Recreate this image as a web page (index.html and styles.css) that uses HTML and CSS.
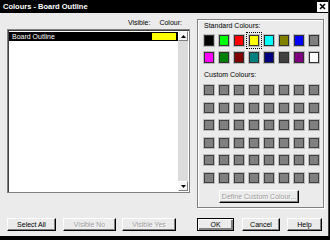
FILE: index.html
```html
<!DOCTYPE html>
<html lang="en">
<head>
  <meta charset="UTF-8">
  <title>Colours - Board Outline</title>
  <link rel="stylesheet" href="styles.css">
</head>
<body>
  <div class="window">
    <div class="titlebar">
      <span>Colours - Board Outline</span>
      <span class="close">
        <svg width="7" height="7" viewBox="0 0 7 7"><path d="M1 1L6 6M6 1L1 6" stroke="#000" stroke-width="1.6"/></svg>
      </span>
    </div>

    <div class="main">
      <div class="left">
        <div class="heads">
          <span>Visible:</span>
          <span>Colour:</span>
        </div>
        <div class="list">
          <div class="rows">
            <div class="row sel">
              <span>Board Outline</span>
              <span class="chip"></span>
            </div>
          </div>
          <div class="scroll">
            <div class="arrow"><svg width="5" height="3" viewBox="0 0 5 3"><path d="M0 3L2.5 0L5 3Z" fill="#000"/></svg></div>
            <div class="track"></div>
            <div class="arrow"><svg width="5" height="3" viewBox="0 0 5 3"><path d="M0 0L2.5 3L5 0Z" fill="#000"/></svg></div>
          </div>
        </div>
      </div>

      <div class="group">
        <div class="label">Standard Colours:</div>
        <div class="std">
          <span class="sw" style="background:#000000"></span>
          <span class="sw" style="background:#00ff00"></span>
          <span class="sw" style="background:#ff0000"></span>
          <span class="sw focus" style="background:#ffff00"></span>
          <span class="sw" style="background:#00ffff"></span>
          <span class="sw" style="background:#808000"></span>
          <span class="sw" style="background:#0000ff"></span>
          <span class="sw" style="background:#808080"></span>
          <span class="sw" style="background:#ff00ff"></span>
          <span class="sw" style="background:#008000"></span>
          <span class="sw" style="background:#800000"></span>
          <span class="sw" style="background:#008080"></span>
          <span class="sw" style="background:#000080"></span>
          <span class="sw" style="background:#404040"></span>
          <span class="sw" style="background:#800080"></span>
          <span class="sw" style="background:#ffffff"></span>
        </div>
        <div class="label custom-label">Custom Colours:</div>
        <div class="custom" id="custom"></div>
        <div class="btn define disabled">Define Custom Colour...</div>
      </div>
    </div>

    <div class="footer">
      <div class="btn w-sel">Select All</div>
      <div class="btn w-no disabled">Visible No</div>
      <div class="btn w-yes disabled">Visible Yes</div>
      <div class="btn w-ok default">OK</div>
      <div class="btn w-cancel">Cancel</div>
      <div class="btn w-help">Help</div>
    </div>
  </div>
  <script>
    const custom = document.getElementById('custom');
    for (let i = 0; i < 48; i++) {
      const cell = document.createElement('span');
      cell.className = 'sw grey';
      custom.appendChild(cell);
    }
  </script>
</body>
</html>
```

FILE: styles.css
```css
* {
  margin: 0;
  padding: 0;
  box-sizing: border-box;
  font-family: "Liberation Sans", Arial, sans-serif;
}

body {
  background: #000;
  width: 330px;
  height: 240px;
  overflow: hidden;
}

.window {
  width: 329px;
  height: 236px;
  background: #ebebeb;
  border-right: 1px solid #404040;
  display: flex;
  flex-direction: column;
}

.titlebar {
  height: 13px;
  background: #000;
  color: #fff;
  font-size: 7.5px;
  font-weight: bold;
  display: flex;
  align-items: center;
  justify-content: space-between;
  padding-left: 3px;
}

.close {
  width: 11px;
  height: 10px;
  background: #fff;
  display: flex;
  align-items: center;
  justify-content: center;
}

.main {
  display: flex;
  gap: 7px;
  padding-left: 7px;
}

.left {
  width: 183px;
}

.heads {
  height: 16px;
  display: flex;
  align-items: center;
  justify-content: flex-end;
  gap: 9px;
  padding: 2px 8px 0 0;
  font-size: 7px;
  color: #000;
}

.list {
  height: 164px;
  background: #fff;
  border: 1px solid #808080;
  box-shadow: inset 1px 1px 0 #404040;
  display: flex;
  padding: 1px 1px 1px 1px;
}

.rows {
  flex: 1;
  padding-top: 1px;
}

.row {
  height: 9px;
  font-size: 7px;
  display: flex;
  align-items: center;
  justify-content: space-between;
  padding: 0 2px 0 3px;
}

.row.sel {
  background: #000;
  color: #fff;
}

.chip {
  width: 24px;
  height: 7px;
  background: #ffff00;
}

.scroll {
  width: 10px;
  display: flex;
  flex-direction: column;
  background: #dcdcdc;
}

.arrow {
  height: 10px;
  background: #f4f4f4;
  border: 1px solid;
  border-color: #fff #808080 #808080 #fff;
  display: flex;
  align-items: center;
  justify-content: center;
}

.track {
  flex: 1;
}

.group {
  width: 127px;
  height: 189px;
  margin-top: 6px;
  border: 1px solid #808080;
  box-shadow: 1px 1px 0 #fff, inset 1px 1px 0 #fff;
  padding: 1px 0 0 6px;
}

.label {
  height: 10px;
  line-height: 10px;
  font-size: 7px;
  color: #000;
}

.std {
  display: grid;
  grid-template-columns: repeat(8, 10px);
  grid-auto-rows: 11px;
  column-gap: 5px;
  row-gap: 6px;
  margin-top: 4px;
}

.custom-label {
  margin-top: 7px;
}

.custom {
  display: grid;
  grid-template-columns: repeat(8, 10px);
  grid-auto-rows: 10px;
  column-gap: 5px;
  row-gap: 7.5px;
  margin-top: 5px;
}

.sw {
  border: 1px solid #303030;
  box-shadow: 0 0 0 1px #bcbcbc;
}

.sw.grey {
  background: #808080;
  border-color: #404040;
}

.sw.focus {
  outline: 1px dotted #000;
  outline-offset: 2px;
}

.btn {
  height: 13px;
  background: #ebebeb;
  border: 1px solid;
  border-color: #fff #000 #000 #fff;
  box-shadow: inset -1px -1px 0 #808080;
  font-size: 7px;
  color: #000;
  display: flex;
  align-items: center;
  justify-content: center;
}

.btn.disabled {
  color: #9a9a9a;
  text-shadow: 1px 1px 0 #fff;
}

.btn.default {
  border: 1px solid #000;
  box-shadow: inset 1px 1px 0 #fff, inset -2px -2px 0 #808080;
}

.define {
  width: 80px;
  margin: 7.5px 0 0 15px;
}

.footer {
  display: flex;
  margin-top: 10px;
  padding-left: 7px;
}

.w-sel { width: 49px; }
.w-no { width: 53px; margin-left: 7px; }
.w-yes { width: 54px; margin-left: 6px; }
.w-ok { width: 37px; margin-left: 21px; }
.w-cancel { width: 38px; margin-left: 8px; }
.w-help { width: 35px; margin-left: 7px; }
```
